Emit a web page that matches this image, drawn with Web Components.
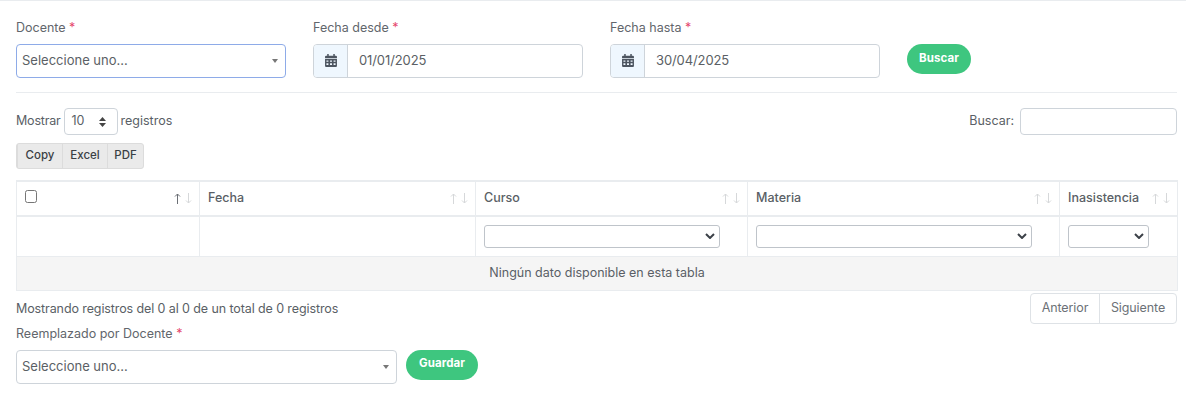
<!DOCTYPE html>
<html lang="es">
<head>
<meta charset="utf-8">
<title>Inasistencias</title>
<style>
  html, body { margin: 0; background: #fff; }
  body { font: 12.5px/1.5 Inter, "Open Sans", "Liberation Sans", sans-serif; color: #5a5f66; }
</style>
</head>
<body>
<absence-page></absence-page>

<script>
// small helper: every element clones its own template into an open shadow root
function define(name, html, setup) {
  const template = document.createElement("template");
  template.innerHTML = html;
  customElements.define(name, class extends HTMLElement {
    constructor() {
      super();
      this.attachShadow({ mode: "open" });
      this.shadowRoot.appendChild(template.content.cloneNode(true));
    }
    connectedCallback() {
      if (setup) setup(this, this.shadowRoot);
    }
  });
}

define("form-field", /*html*/ `
<style>
  :host { display: block; }
  label { display: block; height: 17px; line-height: 17px; margin-bottom: 8px; color: #62666c; }
  i { font-style: normal; color: #e5476b; }
</style>
<label><span id="t"></span> <i>*</i></label>
<slot></slot>
`, (el, root) => { root.getElementById("t").textContent = el.getAttribute("label"); });

define("select-box", /*html*/ `
<style>
  :host { display: flex; align-items: center; box-sizing: border-box; height: 34px; padding: 0 6px 0 5px; background: #fff;
    border: 1px solid #ced4da; border-radius: 4px; font-size: 13px; color: #5b5f65; }
  :host([focused]) { border-color: #8eabe8; }
  span { flex: 1; }
  b { width: 0; height: 0; margin-right: 1px; border: 3px solid transparent; border-top: 4px solid #777; border-bottom: 0; }
</style>
<span><slot></slot></span><b></b>
`);

define("date-input", /*html*/ `
<style>
  :host { display: flex; box-sizing: border-box; height: 34px; border: 1px solid #ced4da; border-radius: 4px; overflow: hidden; background: #fff; font-size: 13px; color: #5b5f65; letter-spacing: -.1px; }
  div { display: flex; align-items: center; justify-content: center; box-sizing: border-box; width: 34px; padding-bottom: 2px; background: #eff7fe; border-right: 1px solid #ced4da; }
  span { display: flex; align-items: center; padding-left: 11px; }
</style>
<div>
  <svg width="12" height="13" viewBox="0 0 11 12" fill="#4d5560">
    <path d="M2 0h1.4v1.5h4.2V0H9v1.5h1a1 1 0 0 1 1 1V4H0V2.5a1 1 0 0 1 1-1h1z"/>
    <path fill-rule="evenodd" d="M0 4.7h11V11a1 1 0 0 1-1 1H1a1 1 0 0 1-1-1zM1.3 6v1.2h1.8V6zm3.3 0v1.2h1.8V6zm3.3 0v1.2h1.8V6zM1.3 8.6v1.6h1.8V8.6zm3.3 0v1.6h1.8V8.6zm3.3 0v1.6h1.8V8.6z"/>
  </svg>
</div>
<span><slot></slot></span>
`);

define("pill-button", /*html*/ `
<style>
  :host { display: inline-flex; align-items: center; justify-content: center; box-sizing: border-box; height: 30px; padding: 0 12px 1px; border-radius: 15px; background: #3ec67f; color: #fff; font-weight: 700; font-size: 11.5px; letter-spacing: .1px; }
</style>
<slot></slot>
`);

define("length-control", /*html*/ `
<style>
  :host { display: flex; align-items: center; gap: 3px; height: 27px; }
  span { letter-spacing: -.2px; }
  div { display: flex; align-items: center; justify-content: space-between; box-sizing: border-box; width: 54px; height: 27px; padding: 0 11px 0 7px; border: 1px solid #ced4da; border-radius: 4px; }
  svg { display: block; }
</style>
<span>Mostrar</span>
<div>10
  <svg width="7" height="10" viewBox="0 0 7 10" fill="#444"><path d="M3.5 0 7 4H0zM0 6h7L3.5 10z"/></svg>
</div>
registros
`);

define("search-control", /*html*/ `
<style>
  :host { display: flex; align-items: center; gap: 6px; height: 27px; }
  div { box-sizing: border-box; width: 157px; height: 27px; border: 1px solid #ced4da; border-radius: 4px; }
</style>
Buscar:
<div></div>
`);

define("export-buttons", /*html*/ `
<style>
  :host { display: inline-flex; height: 26px; box-sizing: border-box; border: 1px solid #dcdcdc; border-radius: 3px; background: #eaeaea; color: #3a3f45; font-size: 11.5px; font-weight: 500; }
  span { display: flex; align-items: center; justify-content: center; box-sizing: border-box; width: 45px; border-left: 1px solid #dcdcdc; }
  span:first-child { border-left: 0; }
  span:last-child { width: 36px; }
</style>
<span>Copy</span><span>Excel</span><span>PDF</span>
`);

define("sort-arrows", /*html*/ `
<style>
  :host { display: block; line-height: 0; }
  svg { display: block; }
  .on { stroke: #6b6f75; }
  path { stroke: #d6d8da; fill: none; stroke-width: 1; }
</style>
<svg width="18" height="11" viewBox="0 0 18 11">
  <path id="up" d="M3.5 11V1M1 3.5 3.5 1 6 3.5"/>
  <path d="M14.5 0v10M12 7.5 14.5 10 17 7.5"/>
</svg>
`, (el, root) => { if (el.hasAttribute("active")) root.getElementById("up").classList.add("on"); });

define("native-select", /*html*/ `
<style>
  :host { display: flex; align-items: center; justify-content: flex-end; box-sizing: border-box; height: 23px; padding-right: 4px; background: #fff; border: 1px solid #bfc4ca; border-radius: 3px; }
</style>
<svg width="10" height="6" viewBox="0 0 10 6" fill="none" stroke="#3c4148" stroke-width="2"><path d="M1 1l4 4 4-4"/></svg>
`);

define("data-table", /*html*/ `
<style>
  :host { display: block; }
  table { width: 100%; table-layout: fixed; border-collapse: collapse; }
  th, td { box-sizing: border-box; padding: 0 8px; border: 1px solid #e9ecef; text-align: left; color: #5a5f66; }
  thead th { height: 35px; font-weight: 500; border-top: 2px solid #e9ecef; border-bottom: 2px solid #e9ecef; }
  .filters td { height: 40px; }
  .empty td { height: 34px; text-align: center; background: #f5f5f5; }
  .head { display: flex; align-items: center; justify-content: space-between; }
  .box { box-sizing: border-box; display: block; width: 12px; height: 13px; margin: -5px 0 0 0; border: 1px solid #767676; border-radius: 2.5px; background: #fff; }
  sort-arrows { margin-right: -1px; }
</style>
<table>
  <colgroup><col style="width:183px"><col style="width:276px"><col style="width:272px"><col style="width:312px"><col style="width:118px"></colgroup>
  <thead>
    <tr>
      <th><div class="head"><span class="box"></span><sort-arrows active></sort-arrows></div></th>
      <th><div class="head">Fecha<sort-arrows></sort-arrows></div></th>
      <th><div class="head">Curso<sort-arrows></sort-arrows></div></th>
      <th><div class="head">Materia<sort-arrows></sort-arrows></div></th>
      <th><div class="head">Inasistencia<sort-arrows></sort-arrows></div></th>
    </tr>
  </thead>
  <tbody>
    <tr class="filters">
      <td></td><td></td>
      <td><native-select style="width:236px"></native-select></td>
      <td><native-select style="width:276px"></native-select></td>
      <td><native-select style="width:81px"></native-select></td>
    </tr>
    <tr class="empty"><td colspan="5">Ningún dato disponible en esta tabla</td></tr>
  </tbody>
</table>
`);

define("pager-buttons", /*html*/ `
<style>
  :host { display: inline-flex; box-sizing: border-box; height: 31px; border: 1px solid #dee2e6; border-radius: 4px; color: #6c7177; letter-spacing: -.1px; }
  span { display: flex; align-items: center; justify-content: center; box-sizing: border-box; width: 68px; }
  span + span { width: 77px; border-left: 1px solid #dee2e6; }
</style>
<span>Anterior</span><span>Siguiente</span>
`);

define("absence-page", /*html*/ `
<style>
  :host { display: block; box-sizing: border-box; height: 401px; padding: 18px 9px 0 16px; border-top: 1px solid #e9ecef; }
  hr { height: 1px; margin: 0; border: 0; background: #e9ecef; }
  .filters { display: grid; grid-template-columns: 270px 270px 270px auto; gap: 27px; align-items: start; height: 73px; }
  .filters pill-button { margin-top: 25px; justify-self: start; width: 64px; padding-left: 0; padding-right: 0; }
  .tools { display: flex; justify-content: space-between; margin-top: 15px; }
  export-buttons { margin-top: 8px; }
  .exports { display: block; height: 45px; }
  .foot { display: flex; justify-content: space-between; align-items: center; height: 33px; margin-top: 1px; }
  .foot span { letter-spacing: -.1px; padding-top: 2px; }
  .replace { display: grid; grid-template-columns: 381px auto; gap: 9px; margin-top: 0; }
  .replace pill-button { margin-top: 25px; width: 72px; padding-left: 0; padding-right: 0; }
</style>
<div class="filters">
  <form-field label="Docente"><select-box focused>Seleccione uno...</select-box></form-field>
  <form-field label="Fecha desde"><date-input>01/01/2025</date-input></form-field>
  <form-field label="Fecha hasta"><date-input>30/04/2025</date-input></form-field>
  <pill-button>Buscar</pill-button>
</div>
<hr>
<div class="tools"><length-control></length-control><search-control></search-control></div>
<div class="exports"><export-buttons></export-buttons></div>
<data-table></data-table>
<div class="foot"><span>Mostrando registros del 0 al 0 de un total de 0 registros</span><pager-buttons></pager-buttons></div>
<div class="replace">
  <form-field label="Reemplazado por Docente"><select-box>Seleccione uno...</select-box></form-field>
  <pill-button>Guardar</pill-button>
</div>
`);
</script>
</body>
</html>
